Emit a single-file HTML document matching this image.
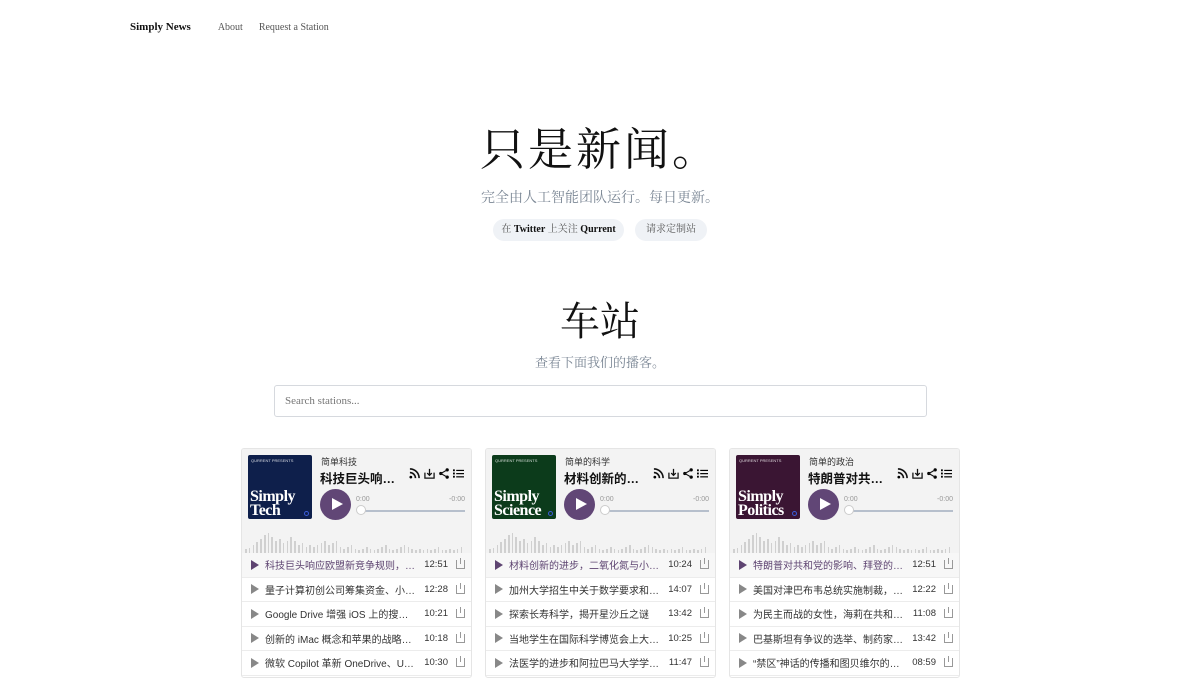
<!DOCTYPE html>
<html><head><meta charset="utf-8"><style>
*{box-sizing:border-box;margin:0;padding:0}
body{width:1200px;height:672px;overflow:hidden;background:#fff;font-family:"Liberation Serif","Noto Serif CJK SC",serif;color:#111}
.nav{position:absolute;top:21px;left:130px;font-size:10px;color:#555;white-space:nowrap}
.nav b{color:#111;font-size:11px;margin-right:27px}
.nav span{margin-right:16px}
h1{position:absolute;top:114px;width:100%;text-align:center;font-weight:400;font-size:45px;letter-spacing:3px;font-family:"Noto Serif CJK SC",serif;line-height:64px}
.sub{position:absolute;width:100%;text-align:center;color:#7a8694;font-size:14px}
.btn{position:absolute;top:219px;height:22px;border-radius:11px;background:#eff2f6;font-size:10px;line-height:22px;text-align:center;color:#555;white-space:nowrap}
.btn b{color:#111}
h2{position:absolute;top:290px;width:100%;text-align:center;font-weight:400;font-size:40px;font-family:"Noto Serif CJK SC",serif}
.search{position:absolute;left:274px;top:385px;width:653px;height:32px;border:1px solid #d6d9de;border-radius:3px;font-size:11px;color:#777;padding:9px 10px}
.card{position:absolute;top:448px;width:231px;height:230px;border:1px solid #e5e5e5;border-radius:3px;overflow:hidden;font-family:"Liberation Sans","Noto Sans CJK SC",sans-serif;background:#fff}
.hd{background:#f3f3f3;height:104px;position:relative}
.cov{position:absolute;left:6px;top:6px;width:64px;height:64px;border-radius:2px;color:#fff}
.cov small{position:absolute;left:3px;top:3px;font-size:4px;opacity:.8}
.cov span{position:absolute;left:2px;bottom:1px;font-family:"Liberation Serif",serif;font-weight:700;font-size:16px;line-height:14px;letter-spacing:-.5px}
.cov i{position:absolute;right:3px;bottom:3px;width:5px;height:5px;border:1px solid #3a5cd8;border-radius:50%}
.st{position:absolute;left:79px;top:6px;font-size:9px;color:#333}
.tt{position:absolute;left:78px;top:19px;width:82px;white-space:nowrap;overflow:hidden;text-overflow:ellipsis;font-size:12.5px;font-weight:700;color:#111}
.ic{position:absolute;right:7px;top:19px;display:flex;gap:4px}
.pl{position:absolute;left:78px;top:40px;width:31px;height:31px;border-radius:50%;background:#614676}
.pl:after{content:"";position:absolute;left:12px;top:9px;border-left:11px solid #fff;border-top:6.5px solid transparent;border-bottom:6.5px solid transparent}
.tm{position:absolute;top:47px;font-size:7px;color:#999}
.bar{position:absolute;left:117px;right:6px;top:61px;height:2px;background:#b6bfcc}
.knob{position:absolute;left:114px;top:56px;width:10px;height:10px;border-radius:50%;background:#fff;border:1px solid #ccc}
.wv{position:absolute;left:3px;bottom:0;height:22px;display:flex;align-items:flex-end;gap:2.2px}
.wv b{width:1.6px;background:#d0d0d0}
.row{height:24.5px;border-bottom:1px solid #ececec;display:flex;align-items:center;font-size:10px;color:#333;padding-left:9px}
.row:before{content:"";border-left:8px solid #888;border-top:5px solid transparent;border-bottom:5px solid transparent;margin-right:6px}
.row.a{color:#5e4471;background:#f7f7f7}.row.a:before{border-left-color:#5e4471}
.row .t{width:150px;white-space:nowrap;overflow:hidden;text-overflow:ellipsis}
.row .d{width:33px;text-align:right;font-size:9.5px;color:#333}
.row .g{margin-left:8px;width:9px;height:9px;border:1px solid #999;border-top:none;position:relative}
.row .g:after{content:"";position:absolute;left:3px;top:-2px;width:1px;height:6px;background:#999}
</style></head><body>
<div class="nav"><b>Simply News</b><span>About</span><span>Request a Station</span></div>
<h1>只是新闻。</h1>
<div class="sub" style="top:187px">完全由人工智能团队运行。每日更新。</div>
<div class="btn" style="left:493px;width:131px">在 <b>Twitter</b> 上关注 <b>Qurrent</b></div>
<div class="btn" style="left:635px;width:72px">请求定制站</div>
<h2>车站</h2>
<div class="sub" style="top:352px;font-size:13px">查看下面我们的播客。</div>
<div class="search">Search stations...</div>
<div id="c"></div>
<script>
var cards=[[241,"#0e1f4b","Tech","简单科技","科技巨头响应欧盟",["科技巨头响应欧盟新竞争规则，罗...","12:51"],[["量子计算初创公司筹集资金、小公...","12:28"],["Google Drive 增强 iOS 上的搜索、...","10:21"],["创新的 iMac 概念和苹果的战略转变","10:18"],["微软 Copilot 革新 OneDrive、Ultral...","10:30"]]],
[485,"#0c3b1b","Science","简单的科学","材料创新的进步",["材料创新的进步，二氧化氮与小儿...","10:24"],[["加州大学招生中关于数学要求和数...","14:07"],["探索长寿科学，揭开星沙丘之谜","13:42"],["当地学生在国际科学博览会上大放...","10:25"],["法医学的进步和阿拉巴马大学学生...","11:47"]]],
[729,"#3a1533","Politics","简单的政治","特朗普对共和党",["特朗普对共和党的影响、拜登的移...","12:51"],[["美国对津巴布韦总统实施制裁，\u201c超...","12:22"],["为民主而战的女性，海莉在共和党...","11:08"],["巴基斯坦有争议的选举、制药家族...","13:42"],["\u201c禁区\u201d神话的传播和图贝维尔的争...","08:59"]]]];
var h="";
var hs=[4,5,8,11,14,18,20,16,12,14,10,12,16,12,8,10,6,8,6,8,10,12,8,10,12,6,4,6,8,4,3,4,6,4,3,4,6,8,4,3,4,6,8,6,4,3,4,3,4,3,4,6,3,3,4,3,4,6];
var icons='<svg width="11" height="11" viewBox="0 0 12 12"><circle cx="2" cy="10" r="1.5"/><path d="M1 5a6 6 0 0 1 6 6M1 1a10 10 0 0 1 10 10" stroke="#111" stroke-width="1.8" fill="none"/></svg><svg width="11" height="11" viewBox="0 0 12 12" fill="none" stroke="#111" stroke-width="1.4"><path d="M1 5v6h10V5M6 1v7M3.5 5.5 6 8l2.5-2.5"/></svg><svg width="10" height="11" viewBox="0 0 11 12"><circle cx="9" cy="2" r="1.8"/><circle cx="2" cy="6" r="1.8"/><circle cx="9" cy="10" r="1.8"/><path d="M9 2 2 6l7 4" stroke="#111" stroke-width="1.2" fill="none"/></svg><svg width="11" height="11" viewBox="0 0 12 12"><rect x="0" y="1.5" width="2" height="2"/><rect x="0" y="5" width="2" height="2"/><rect x="0" y="8.5" width="2" height="2"/><rect x="3.5" y="2" width="8.5" height="1.3"/><rect x="3.5" y="5.5" width="8.5" height="1.3"/><rect x="3.5" y="9" width="8.5" height="1.3"/></svg>';
cards.forEach(function(c){
var w="";hs.forEach(function(x){w+='<b style="height:'+x+'px"></b>'});
h+='<div class="card" style="left:'+c[0]+'px"><div class="hd"><div class="cov" style="background:'+c[1]+'"><small>QURRENT PRESENTS</small><span>Simply<br>'+c[2]+'</span><i></i></div><div class="st">'+c[3]+'</div><div class="tt">'+c[4]+'</div><div class="ic">'+icons+'</div><div class="pl"></div><div class="tm" style="left:114px">0:00</div><div class="tm" style="right:6px">-0:00</div><div class="bar"></div><div class="knob"></div><div class="wv">'+w+'</div></div>';
h+='<div class="row a"><span class="t">'+c[5][0]+'</span><span class="d">'+c[5][1]+'</span><span class="g"></span></div>';
c[6].forEach(function(r){h+='<div class="row"><span class="t">'+r[0]+'</span><span class="d">'+r[1]+'</span><span class="g"></span></div>'});
h+='</div>';});
document.getElementById("c").innerHTML=h;
</script>
</body></html>
